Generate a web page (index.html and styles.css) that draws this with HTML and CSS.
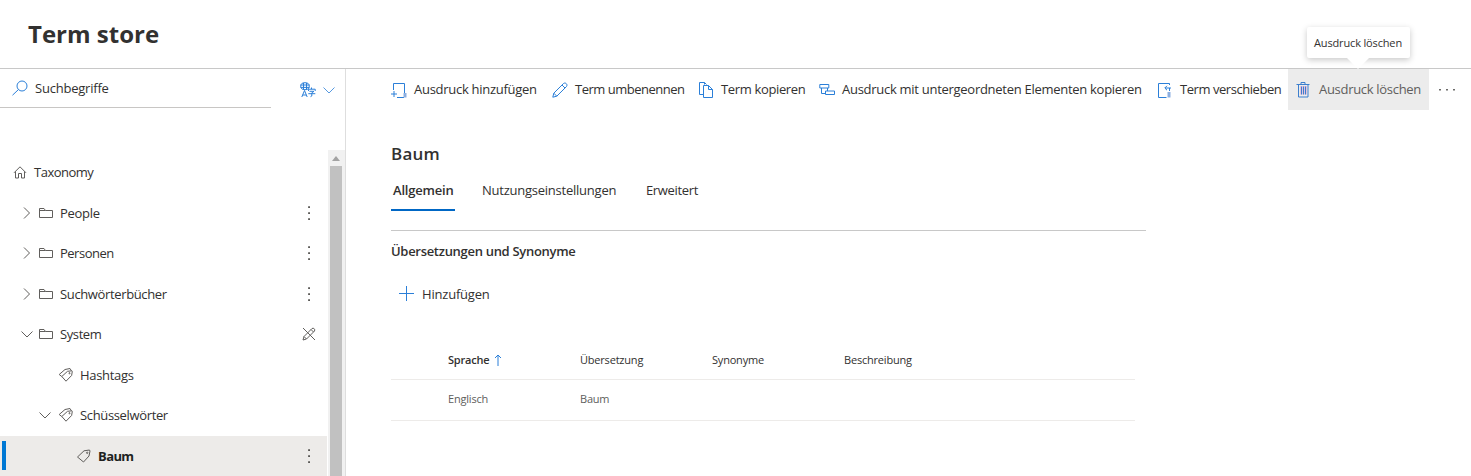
FILE: index.html
```html
<!DOCTYPE html>
<html lang="de">
<head>
<meta charset="utf-8">
<title>Term store</title>
<link rel="stylesheet" href="styles.css">
</head>
<body>
<svg class="sprite">
  <symbol id="folder" viewBox="0 0 16 16"><path d="M1.500 12.500v-9h4.500l1.500 2h7v7zM1.500 5.500h6"/></symbol>
  <symbol id="right" viewBox="0 0 16 16"><path d="M5 2.500l5.500 5.500L5 13.500"/></symbol>
  <symbol id="down" viewBox="0 0 16 16"><path d="M2.500 5.500L8 11l5.500-5.500"/></symbol>
  <symbol id="tag" viewBox="0 0 16 16"><path d="M1.500 9L8 2.800l5.500-.8.500 1-1 5-5.500 6z"/><circle cx="11.200" cy="4.800" r=".7"/></symbol>
  <symbol id="tags" viewBox="0 0 16 16"><path d="M3.800 9.500l5.700-5.200 4.500-.5.300.7-.7 4L8 14.200zM3.800 9.500L1.200 7.500l5.800-5 5-1 1.300 2.200"/><circle cx="11.500" cy="6.200" r=".6"/></symbol>
  <symbol id="dots" viewBox="0 0 16 16"><path class="solid" d="M7.200 1.200h1.700v1.700H7.200zM7.200 7.200h1.700v1.700H7.200zM7.200 13.200h1.700v1.700H7.200z"/></symbol>
</svg>
<header class="header"><h1 class="title">Term store</h1></header>
<div class="shell">
  <aside class="sidebar">
    <div class="search-bar">
      <div class="search">
        <svg class="icon blue" viewBox="0 0 16 16"><circle cx="10" cy="6" r="5"/><path d="M6.500 9.500L.5 15.200"/></svg>
        <span class="t-search">Suchbegriffe</span>
      </div>
      <div class="language">
        <svg class="icon blue" viewBox="0 0 16 16"><ellipse cx="5" cy="4.200" rx="4.300" ry="3.500"/><path d="M.7 3h8.600M.7 5.400h8.600M3.500 1v6.500M6.500 1v6.500M1.800 15L4.500 8.500 7.200 15M2.700 13h3.600M11.500 5.500v1.700M8.500 9V7.200h6.700V9M9.500 9.300h4.500l-2.200 1.500V14l-1.300.7M8.300 11.700h7"/></svg>
        <svg class="icon chev blue"><use href="#down"/></svg>
      </div>
    </div>
    <div class="tree-area">
      <div class="tree">
        <div class="row root"><svg class="icon" viewBox="0 0 16 16"><path d="M2 8.800L8 2.800l6 6M3.500 7.500v6.500h3V9.500h3V14h3V7.500"/></svg><span class="t-tax">Taxonomy</span></div>
        <div class="row group"><svg class="icon"><use href="#right"/></svg><svg class="icon"><use href="#folder"/></svg><span class="t-people">People</span><svg class="icon action"><use href="#dots"/></svg></div>
        <div class="row group"><svg class="icon"><use href="#right"/></svg><svg class="icon"><use href="#folder"/></svg><span class="t-personen">Personen</span><svg class="icon action"><use href="#dots"/></svg></div>
        <div class="row group"><svg class="icon"><use href="#right"/></svg><svg class="icon"><use href="#folder"/></svg><span class="t-such">Suchwörterbücher</span><svg class="icon action"><use href="#dots"/></svg></div>
        <div class="row group"><svg class="icon"><use href="#down"/></svg><svg class="icon"><use href="#folder"/></svg><span class="t-system">System</span><svg class="icon action" viewBox="0 0 16 16"><path d="M2 2l12 12M2 14l1-3.500 8-8c1.500-1 3.500.8 2.500 2.500l-8 8zM3 10.500l2.500 2.500M10 3.500L12.500 6"/></svg></div>
        <div class="row set"><svg class="icon hidden"></svg><svg class="icon"><use href="#tags"/></svg><span class="t-hash">Hashtags</span></div>
        <div class="row set"><svg class="icon"><use href="#down"/></svg><svg class="icon"><use href="#tags"/></svg><span class="t-schl">Schüsselwörter</span></div>
        <div class="row selected"><svg class="icon"><use href="#tag"/></svg><span class="t-baum">Baum</span><svg class="icon action"><use href="#dots"/></svg></div>
      </div>
      <div class="scrollbar"><div class="arrow"></div><div class="thumb"></div></div>
    </div>
  </aside>
  <main class="main">
    <nav class="toolbar">
      <div class="cmd c1"><svg class="icon blue" viewBox="0 0 16 16"><path d="M2.500 8V1.500h11V11M0 12h6M3 9v6M6 15.500h7"/><path class="tab" d="M12.500 11h3v4.500h-3z"/></svg><span>Ausdruck hinzufügen</span></div>
      <div class="cmd c2"><svg class="icon blue" viewBox="0 0 16 16"><path d="M.8 15.200l1-4L11.500 1.500c2-1.500 4.500 1 3 3L4.800 14.200zM1.800 11.200l3 3M10 3l3 3"/></svg><span>Term umbenennen</span></div>
      <div class="cmd c3"><svg class="icon blue" viewBox="0 0 16 16"><path d="M5 12.500H1.500V.5h5l2 2M5.500 3.500h5l4 4v8h-9zM10.500 3.500v4h4M6.500.5v2"/></svg><span>Term kopieren</span></div>
      <div class="cmd c4"><svg class="icon blue" viewBox="0 0 16 16"><path d="M.8 2.500h9v3.500h-9zM2.500 6v5.500h4M6.500 9h9v3.500h-9zM8.500 6v3"/></svg><span>Ausdruck mit untergeordneten Elementen kopieren</span></div>
      <div class="cmd c5"><svg class="icon blue" viewBox="0 0 16 16"><path d="M12.500 3V1.500H1.500v14h8M14 6H8M10 3.800L7.800 6 10 8.200M12.500 6v3"/><path class="tab" d="M10.500 10h3v5.500h-3z"/></svg><span>Term verschieben</span></div>
      <div class="cmd c6 active"><svg class="icon blue" viewBox="0 0 16 16"><path class="bin" d="M4 4h7v8.500H4z"/><path d="M.5 2.500h13M5 2.500v-2h4v2M2.500 2.500v12.500h9.500V2.500M5.500 4.500v8M7.500 4.500v8M9.500 4.500v8"/></svg><span>Ausdruck löschen</span>
        <div class="tooltip">Ausdruck löschen</div>
      </div>
      <div class="more"><svg class="icon" viewBox="0 0 16 16"><path class="solid" d="M.2 7h1.600v1.600H.2zM7.200 7h1.600v1.600H7.200zM14.200 7h1.600v1.600h-1.600z"/></svg></div>
    </nav>
    <section class="content">
      <h2 class="name">Baum</h2>
      <div class="tabs">
        <div class="tab-item current">Allgemein</div>
        <div class="tab-item second">Nutzungseinstellungen</div>
        <div class="tab-item third">Erweitert</div>
      </div>
      <h3 class="subtitle">Übersetzungen und Synonyme</h3>
      <div class="add"><svg class="icon blue" viewBox="0 0 16 16"><path d="M0 7.500h15M7.500 0v15"/></svg><span>Hinzufügen</span></div>
      <div class="table">
        <div class="cells head"><div class="sorted"><span>Sprache</span><svg class="sort blue" viewBox="0 0 8 14"><path d="M4 13V2M1 5l3-3 3 3"/></svg></div><div>Übersetzung</div><div>Synonyme</div><div>Beschreibung</div></div>
        <div class="cells body"><div>Englisch</div><div>Baum</div></div>
      </div>
    </section>
  </main>
</div>
</body>
</html>
```
FILE: styles.css
```css
* { box-sizing: border-box; }
body { margin: 0; height: 476px; overflow: hidden; background: #fff; color: #323130; font: 13px/20px "Open Sans", "Noto Sans", sans-serif; display: flex; flex-direction: column; }
h1, h2, h3 { margin: 0; font-weight: 600; }
span { white-space: nowrap; }
.sprite { position: absolute; width: 0; height: 0; }
.icon { width: 16px; height: 16px; flex: none; fill: none; stroke: #605e5c; stroke-width: 1; }
.solid { fill: #484644; stroke: none; }
.blue { stroke: #2b7fd8; }
.header { height: 69px; flex: none; border-bottom: 1px solid #c8c8c8; padding: 17px 0 0 28px; }
.title { font-size: 24px; line-height: 34px; font-weight: 700; }
.shell { display: flex; flex: 1; min-height: 0; }
.sidebar { width: 346px; flex: none; border-right: 1px solid #dedede; display: flex; flex-direction: column; }
.search-bar { height: 81px; flex: none; display: flex; }
.search { width: 271px; height: 39px; border-bottom: 1px solid #c8c6c4; display: flex; align-items: center; gap: 7px; padding-left: 12px; }
.t-search { letter-spacing: -.22px; }
.language { display: flex; height: 41px; align-items: center; padding-left: 29px; gap: 5px; }
.chev { stroke-width: .8; }
.tree-area { flex: 1; display: flex; min-height: 0; }
.tree { width: 327px; padding-top: 2.500px; margin-right: 1px; }
.row { height: 39.500px; margin-bottom: 1px; display: flex; align-items: center; }
.root { padding-left: 12px; gap: 6px; }
.group { padding-left: 19px; gap: 3px; }
.group span { margin-left: 3px; }
.set { padding-left: 37px; gap: 5px; }
.set span { margin-left: 1px; }
.t-tax { letter-spacing: -.5px; }
.t-people { letter-spacing: -.3px; }
.t-personen { letter-spacing: -.5px; }
.t-such { letter-spacing: -.36px; }
.t-system { letter-spacing: -.4px; }
.t-hash { letter-spacing: -.3px; }
.t-schl { letter-spacing: -.35px; }
.t-baum { letter-spacing: -.6px; }
.action { margin-left: auto; margin-right: 10px; }
.hidden { visibility: hidden; }
.selected { padding-left: 76px; gap: 6px; font-weight: 700; color: #201f1e; background: #edebe9 linear-gradient(#0078d4, #0078d4) 2px 5px / 4px 29px no-repeat; }
.scrollbar { width: 17px; padding-right: 1px; background: #f1f1f1; display: flex; flex-direction: column; align-items: center; }
.arrow { margin: 6px 0 5px; border: 4px solid transparent; border-top: 0; border-bottom: 5px solid #a3a3a3; width: 8px; }
.thumb { width: 12px; flex: 1; background: #c1c1c1; }
.main { flex: 1; min-width: 0; }
.toolbar { height: 41px; padding-left: 38px; display: flex; }
.cmd { display: flex; align-items: center; padding-left: 7px; gap: 7px; position: relative; flex: none; }
.cmd > span { margin-top: -1px; }
.c1 { width: 160px; letter-spacing: -.28px; }
.c2 { width: 147px; letter-spacing: -.5px; }
.c2 .icon { margin-left: 1px; }
.c3 { width: 121px; letter-spacing: -.35px; }
.c4 { width: 338px; letter-spacing: -.28px; }
.c5 { width: 138px; letter-spacing: -.45px; }
.c6 { width: 141px; letter-spacing: -.3px; }
.c6 .icon { margin-left: 1px; }
.active { background: #ececec; color: #605e5c; }
.tab { fill: #8dafe0; stroke: none; }
.bin { fill: #e3c3dc; stroke: none; }
.bin + path { stroke: #3d7fce; }
.more { display: flex; align-items: center; padding-left: 10px; }
.tooltip { position: absolute; left: 19px; top: -42px; width: 103px; height: 31px; background: #fff; border-radius: 2px; box-shadow: 0 2px 6px rgba(0,0,0,.22); font-size: 11px; letter-spacing: -.15px; color: #323130; display: flex; align-items: center; padding-left: 7px; white-space: nowrap; }
.tooltip::after { content: ""; position: absolute; left: 40px; top: 31px; border: 11px solid transparent; border-top-color: #fff; border-bottom: 0; }
.content { padding: 33px 0 0 45px; }
.name { font-size: 17px; line-height: 22px; letter-spacing: .2px; }
.tabs { display: flex; height: 66px; width: 755px; border-bottom: 1px solid #c8c8c8; padding-top: 5px; }
.tab-item { height: 41px; padding-top: 10px; }
.current { width: 64px; padding-left: 2px; border-bottom: 2px solid #0067c5; font-weight: 600; margin-right: 27px; letter-spacing: -.2px; }
.second { width: 164px; letter-spacing: -.24px; }
.third { letter-spacing: -.35px; }
.subtitle { font-size: 13px; line-height: 20px; margin-top: 10px; letter-spacing: -.3px; }
.add { display: flex; align-items: center; gap: 7px; margin-top: 23px; padding-left: 8px; letter-spacing: -.2px; }
.table { margin-top: 36px; width: 744px; font-size: 11px; letter-spacing: -.2px; }
.cells { height: 40px; display: grid; grid-template-columns: 132px 132px 132px 132px; padding-left: 57px; align-items: center; border-bottom: 1px solid #edebe9; }
.sorted { font-weight: 600; display: flex; align-items: center; gap: 5px; }
.sort { width: 8px; height: 14px; fill: none; }
.body { height: 41px; padding-bottom: 2px; color: #605e5c; }
```
